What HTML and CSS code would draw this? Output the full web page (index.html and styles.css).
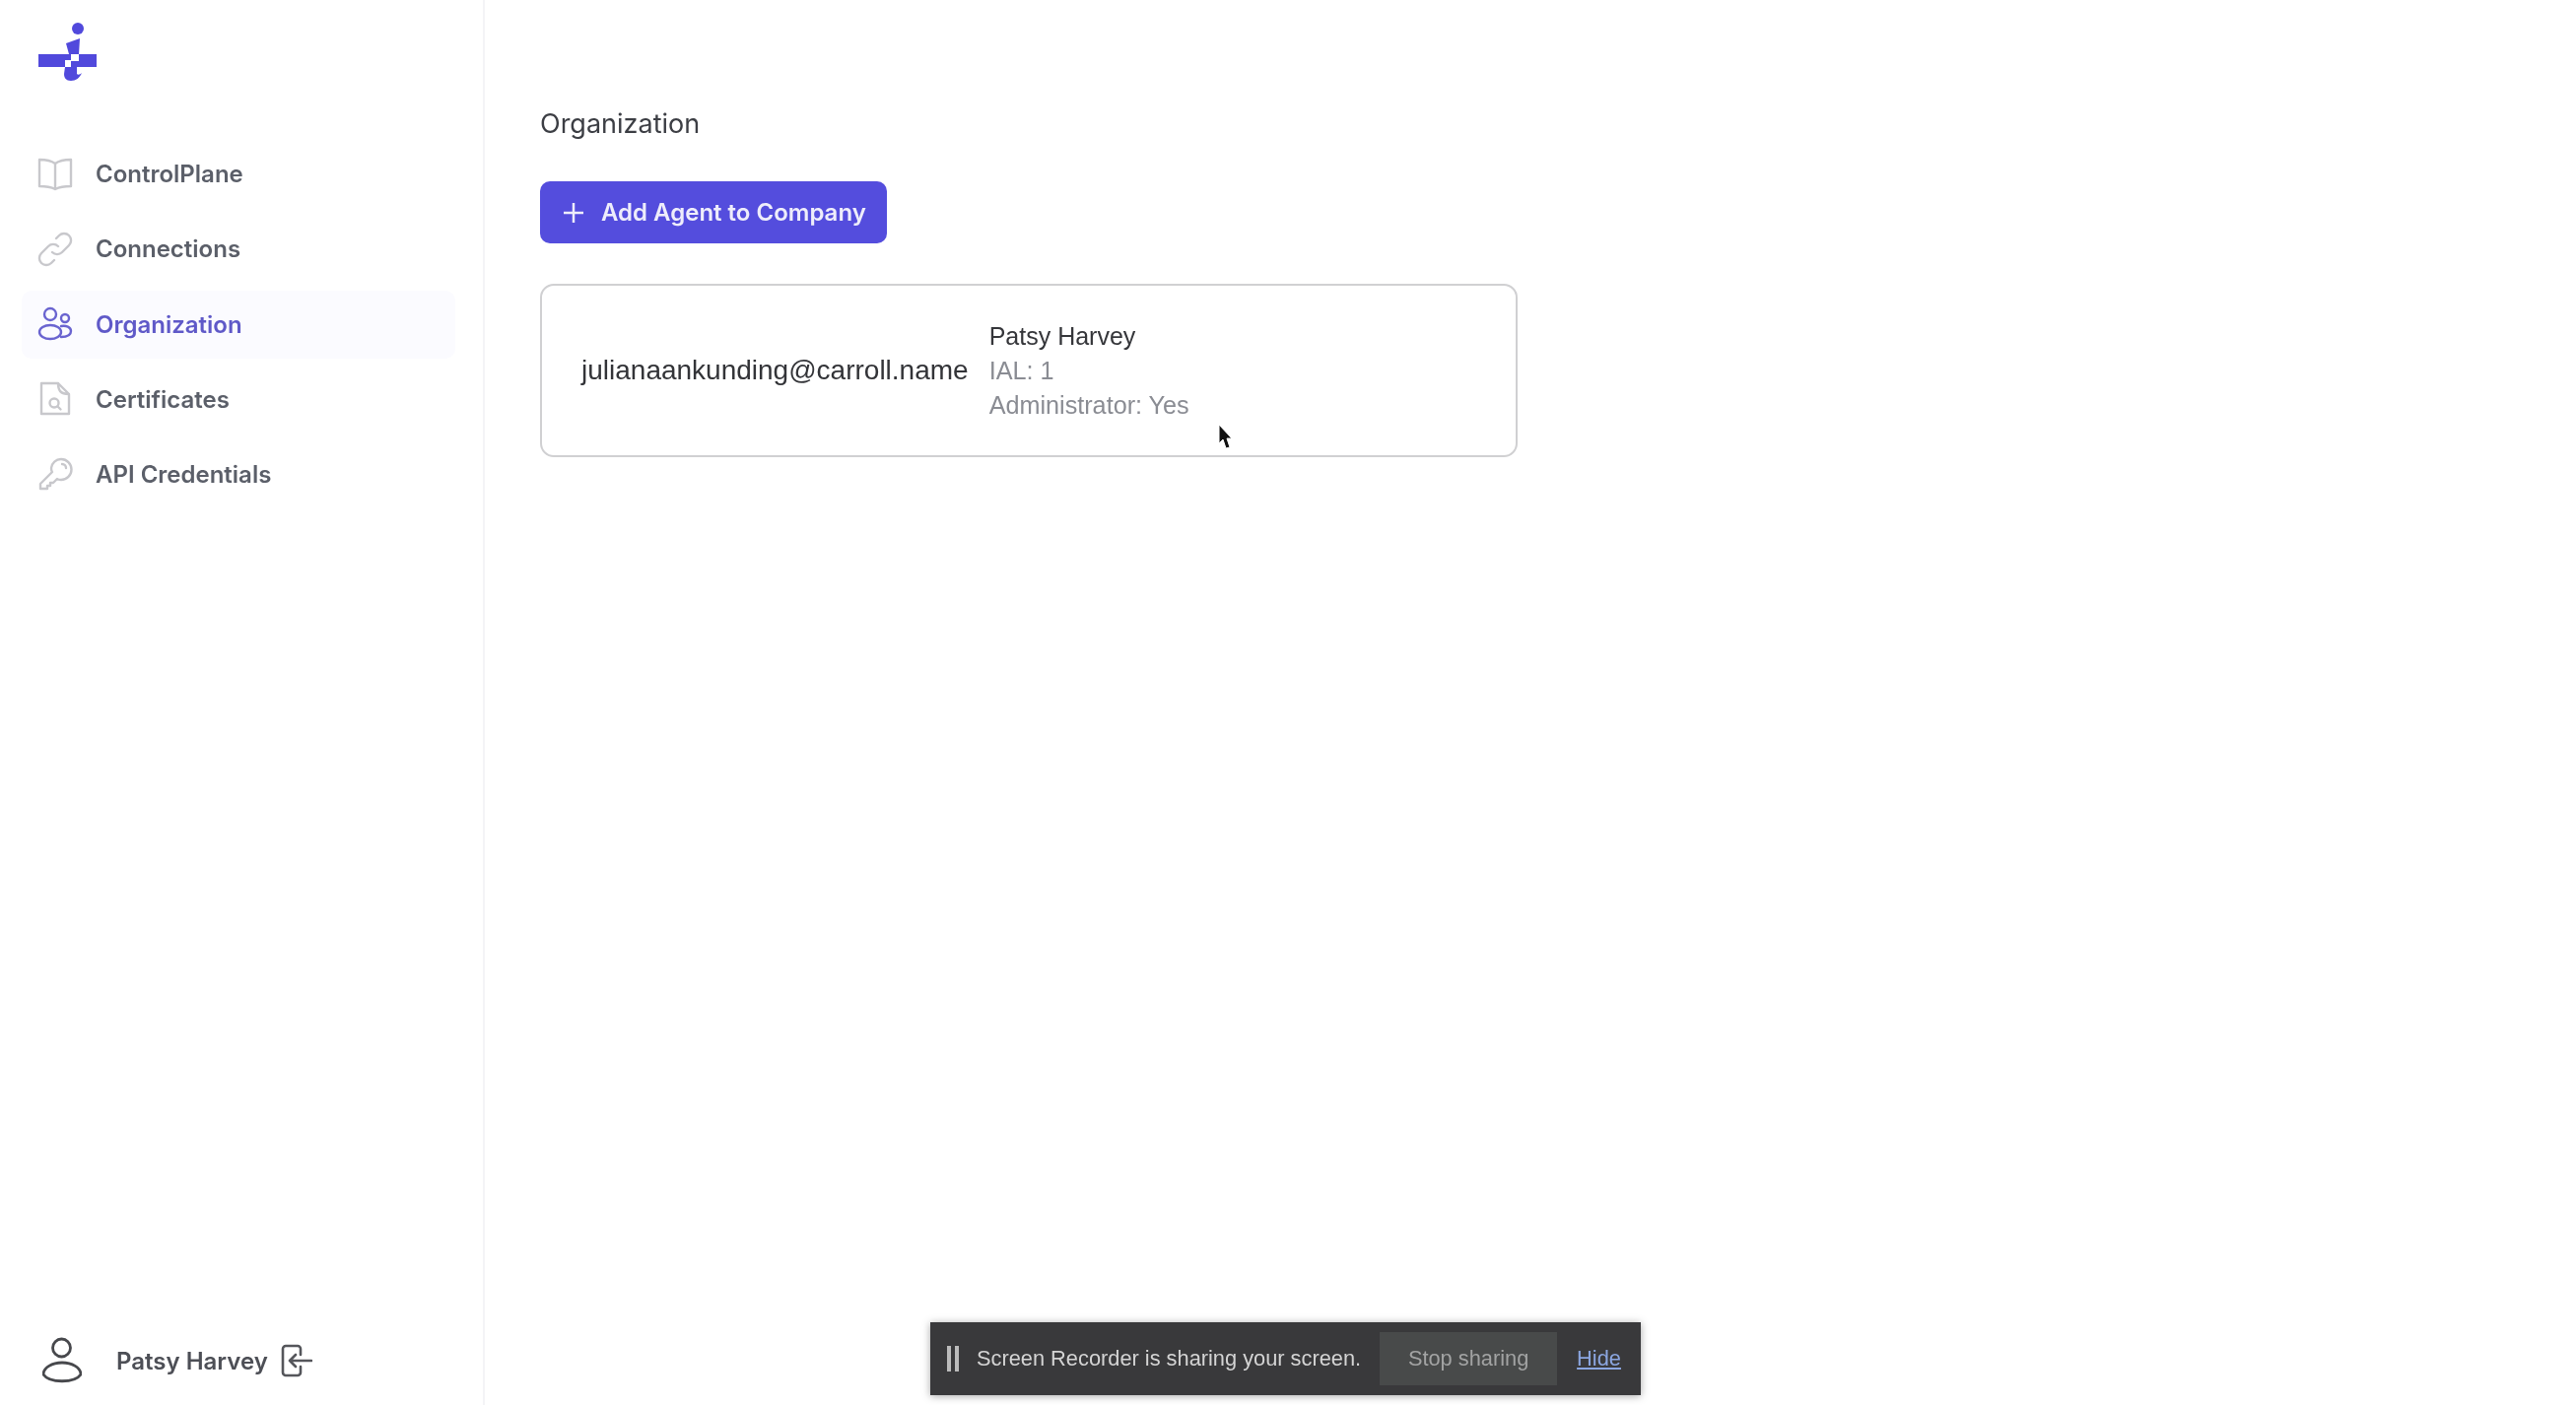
FILE: index.html
```html
<!DOCTYPE html>
<html lang="en">
<head>
<meta charset="utf-8">
<title>Organization</title>
<link rel="stylesheet" href="styles.css">
</head>
<body>
<div class="app">
  <aside class="sidebar">
    <svg class="logo" viewBox="0 0 62 62" aria-hidden="true">
      <circle cx="41" cy="8" r="6"/>
      <path d="M29 23l14-5-1 16H32z"/>
      <path d="M1 34h27v13H1zM42 34h18v13H42z"/>
      <path d="M28 47h14V34H28z" fill="#fff"/>
      <path d="M28 34h6v6h-6zM34 41h8v6h-8z"/>
      <path d="M28 47h12v7c1 1 3 1 5-1-2 5-6 8-11 8-5 0-7-3-7-7z"/>
    </svg>
    <nav class="nav">
      <a class="item">
        <svg class="ico" viewBox="0 0 36 36"><path d="M18 7C14 4 8 3 2 3v27c6 0 12 1 16 3 4-2 10-3 16-3V3c-6 0-12 1-16 4zv26"/></svg>
        <span>ControlPlane</span>
      </a>
      <a class="item">
        <svg class="ico" viewBox="0 0 36 36"><path d="M15 21a7 7 0 0 0 10 0l7-7a7 7 0 0 0-10-10l-3 3M21 15a7 7 0 0 0-10 0l-7 7a7 7 0 0 0 10 10l3-3"/></svg>
        <span>Connections</span>
      </a>
      <a class="item active">
        <svg class="ico" viewBox="0 0 36 36"><circle cx="13" cy="8" r="6"/><circle cx="28" cy="12" r="4"/><ellipse cx="13" cy="26" rx="11" ry="7"/><path d="M24 20c5-1 10 1 10 5s-4 6-10 6"/></svg>
        <span>Organization</span>
      </a>
      <a class="item">
        <svg class="ico" viewBox="0 0 36 36"><path d="M4 2h17l11 11v20H4zM21 2c0 7 2 11 11 11"/><circle cx="17" cy="22" r="4.5"/><path d="M20.500 25.500l3 3"/></svg>
        <span>Certificates</span>
      </a>
      <a class="item">
        <svg class="ico" viewBox="0 0 36 36"><path d="M24 2a10 10 0 0 1 0 21c-2 0-3 0-4-1l-4 4h-3v3h-3v3H3v-5l12-12c-1-1-1-3-1-4A10 10 0 0 1 24 2z"/><path d="M25 7a4 4 0 0 1 4 4"/></svg>
        <span>API Credentials</span>
      </a>
    </nav>
    <div class="user">
      <svg class="user-ico" viewBox="0 0 40 48"><circle cx="19.500" cy="11" r="9"/><path d="M1 38C1 31 10 26 20 26s19 5 19 12c-6 9-32 9-38 0z"/></svg>
      <span class="user-name">Patsy Harvey</span>
      <svg class="logout" viewBox="0 0 32 34"><path d="M20 11V5a3 3 0 0 0-3-3H5a3 3 0 0 0-3 3v24a3 3 0 0 0 3 3h12a3 3 0 0 0 3-3v-6M31 17H9M15 11l-6 6 6 6"/></svg>
    </div>
  </aside>
  <main class="main">
    <h1 class="title">Organization</h1>
    <button class="add" type="button">
      <svg class="plus" viewBox="0 0 20 20"><path d="M10 0v20M0 10h20"/></svg>
      Add Agent to Company
    </button>
    <section class="card">
      <div class="email">julianaankunding@carroll.name</div>
      <div class="info">
        <div class="name">Patsy Harvey</div>
        <div class="meta">IAL: 1</div>
        <div class="meta">Administrator: Yes</div>
      </div>
    </section>
  </main>
</div>
<svg class="cursor" viewBox="0 0 16 28"><path d="M1 1l13 14H9l3 9-4 1-3-9-4 4z"/></svg>
<div class="share">
  <span class="pause"></span>
  <span class="share-text">Screen Recorder is sharing your screen.</span>
  <span class="stop">Stop sharing</span>
  <span class="hide">Hide</span>
</div>
</body>
</html>
```
FILE: styles.css
```css
* { box-sizing: border-box; }
html, body { margin: 0; height: 100%; background: #fff; overflow: hidden; }
body { position: relative; font-family: Inter, "Liberation Sans", sans-serif; filter: blur(0.7px); }
.app { display: flex; height: 1426px; }
.sidebar {
  width: 492px; flex: none; display: flex; flex-direction: column;
  border-right: 2px solid #f4f4f6; padding: 21px 28px 0 22px;
}
.logo { width: 62px; height: 62px; margin-left: 16px; fill: #5149dc; display: block; }
.nav { display: flex; flex-direction: column; gap: 7.300px; margin-top: 59px; }
.item {
  display: flex; align-items: center; gap: 23px; height: 69px; padding-left: 16px;
  color: #5b5f69; font-size: 24px; font-weight: 600; border-radius: 10px;
}
.item.active { background: #fbfbff; color: #5f59c8; }
.ico { width: 36px; height: 36px; flex: none; fill: none; stroke: #c8c8cc; stroke-width: 2.400; stroke-linejoin: round; stroke-linecap: round; }
.active .ico { stroke: #6a64d0; }
.user { margin-top: auto; display: flex; align-items: center; height: 84px; padding: 0 0 6px 21px; color: #4d4f56; font-size: 24px; font-weight: 600; }
.user-ico { width: 40px; height: 48px; fill: none; stroke: #47484c; stroke-width: 2.800; flex: none; }
.user-name { margin-left: 35px; }
.logout { width: 32px; height: 34px; margin-left: 13px; fill: none; stroke: #55565b; stroke-width: 2.600; stroke-linecap: round; stroke-linejoin: round; flex: none; }
.main { flex: 1; padding: 108px 0 0 56px; }
.title { margin: 0; font-size: 27px; line-height: 36px; font-weight: 400; color: #3c3e44; }
.add {
  display: flex; align-items: center; margin: 40px 0 0 0; width: 352px; height: 63px; padding: 0 0 0 24px;
  background: #544ddd; color: #eeedfb; border: 0; border-radius: 10px;
  font: 600 24px Inter, "Liberation Sans", sans-serif;
}
.plus { width: 20px; height: 20px; margin-right: 18px; fill: none; stroke: #eeedfb; stroke-width: 2.500; }
.card {
  display: flex; align-items: center; gap: 21px; width: 992px; height: 176px; margin-top: 41px; padding-left: 40px;
  border: 2px solid #d0d0d2; border-radius: 14px;
  font-family: "Liberation Sans", Arial, sans-serif;
}
.email { font-size: 28px; color: #333438; }
.info { display: flex; flex-direction: column; gap: 0; }
.name { font-size: 25px; line-height: 35px; color: #35363a; }
.meta { font-size: 25.200px; line-height: 35px; color: #8a8c93; }
.cursor { position: absolute; left: 1236px; top: 430px; width: 16px; height: 28px; fill: #111; stroke: #fff; stroke-width: 1; }
.share {
  position: absolute; left: 944px; top: 1342px; width: 721px; height: 74px;
  display: flex; align-items: center; padding-left: 17px; background: #39393b;
  box-shadow: 0 1px 8px rgba(0,0,0,.35); font-family: "Liberation Sans", Arial, sans-serif; font-size: 21.800px;
}
.pause { width: 12px; height: 26px; border-left: 4px solid #bbb; border-right: 4px solid #bbb; flex: none; }
.share-text { margin-left: 18px; color: #d4d4d4; white-space: nowrap; }
.stop { margin-left: 19px; width: 180px; height: 54px; display: flex; align-items: center; justify-content: center; background: #484a4a; color: #a2a3a3; white-space: nowrap; }
.hide { margin-left: 20px; color: #8ba6e0; text-decoration: underline; }
```
